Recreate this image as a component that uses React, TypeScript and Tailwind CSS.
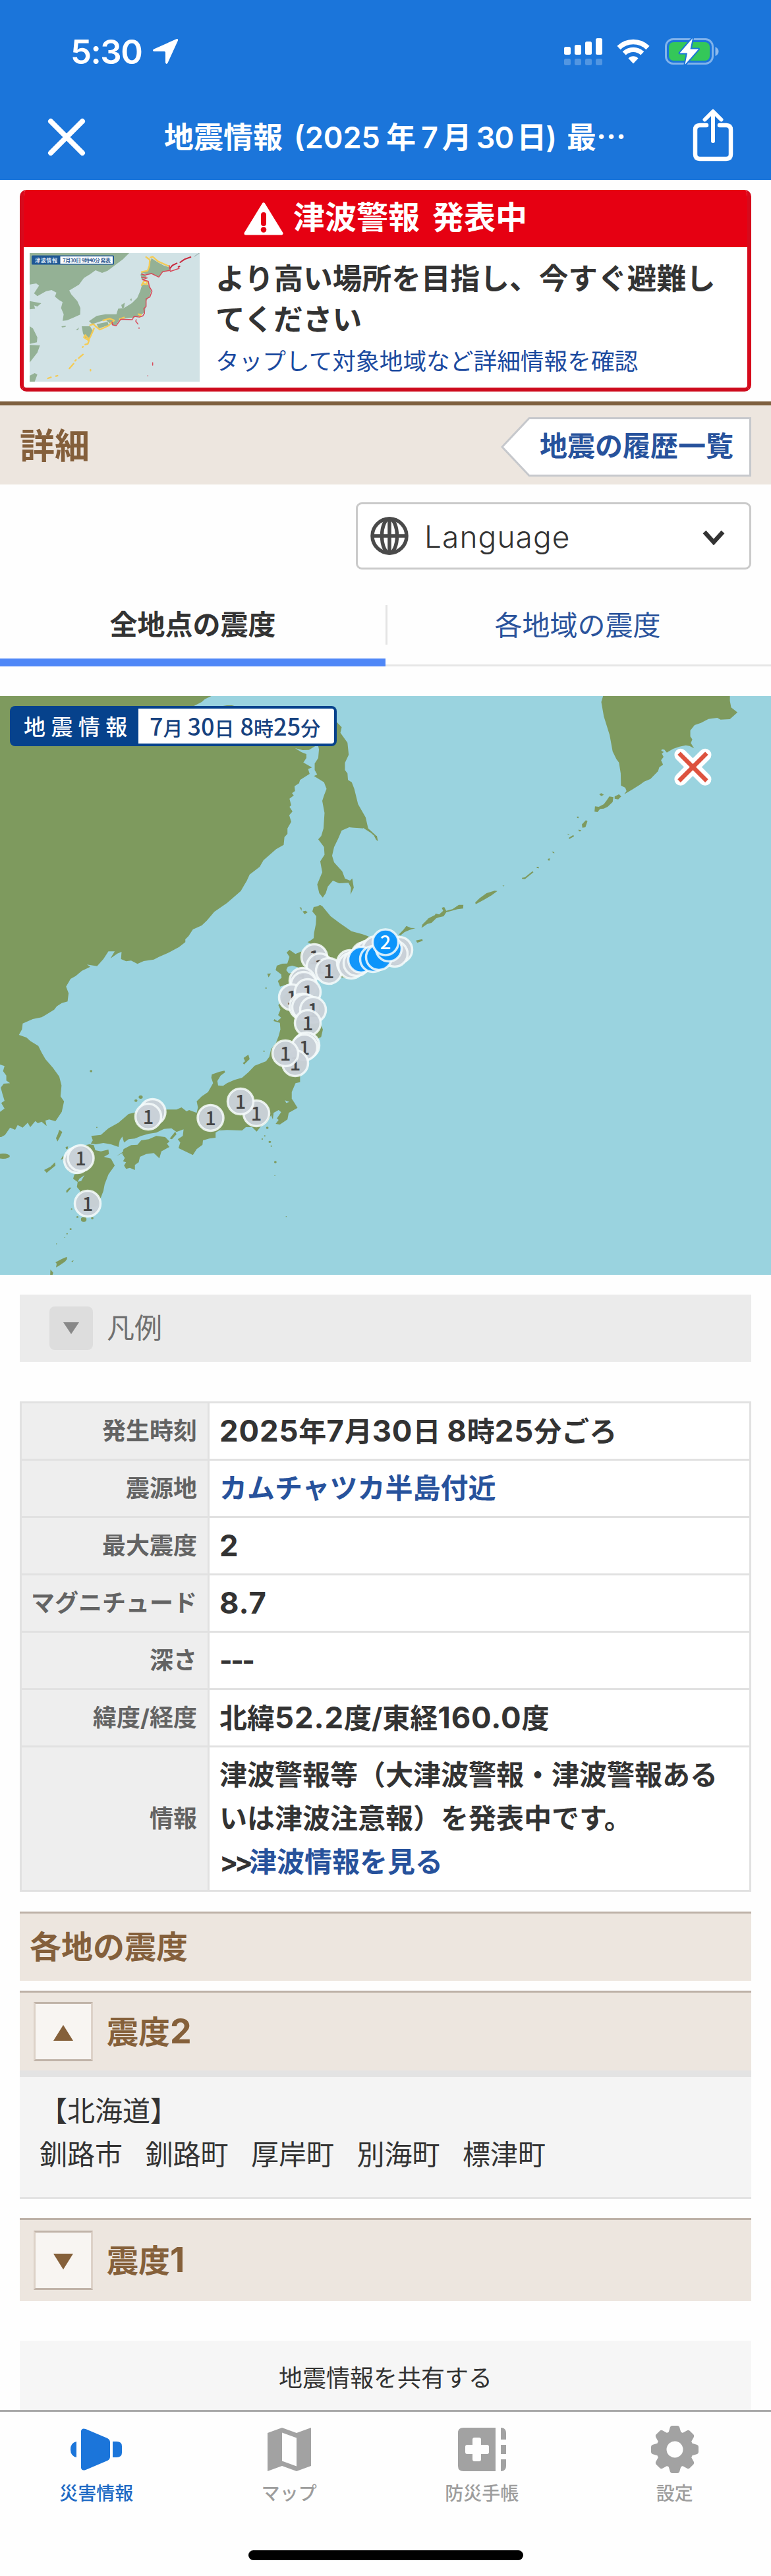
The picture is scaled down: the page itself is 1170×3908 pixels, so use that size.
import type { ReactNode } from 'react';

type Pin = [number, number, string];

const grayPins: Pin[] = [
  [231.5, 631, ''], [225, 638, '1'], [319.5, 640, '1'], [389, 633, '1'], [365, 615, '1'],
  [117, 704, ''], [122.5, 701, '1'], [133, 770, '1'],
  [477, 396, '1'], [485, 410, '1'], [499, 417, '1'],
  [459, 432, '1'], [461, 438, ''], [443, 457, '1'], [467, 449, '1'],
  [459, 471, ''], [463, 472, ''], [475, 476, '1'], [467, 496, '1'],
  [465, 530, ''], [462, 533, '1'], [448, 557, '1'], [433, 542, '1'],
  [553, 393, ''], [560, 390, ''], [570, 384, ''], [531, 405, ''], [533, 409, ''], [541, 405, ''], [606, 385, ''], [599, 391, ''],
];

const bluePins: Pin[] = [
  [548, 400, ''], [566, 399, ''], [575, 396, ''], [590, 383, ''], [585, 373.5, '2'],
];

function MapPin({ pin, fill, color }: { pin: Pin; fill: string; color: string }) {
  const [x, y, label] = pin;
  return (
    <g>
      <circle cx={x} cy={y} r="19.5" fill={fill} fillOpacity="0.97" stroke="#f6fbfb" strokeOpacity="0.85" strokeWidth="3.5" />
      {label && (
        <text x={x} y={y + 10.5} textAnchor="middle" fontSize="29" fontWeight="500" fill={color}>{label}</text>
      )}
    </g>
  );
}

function QuakeMap() {
  return (
    <div className="relative h-[878px] w-full overflow-hidden bg-[#9ad3df]">
      <svg className="block h-full w-full" viewBox="0 0 1170 878" fontFamily="'Noto Sans CJK JP', sans-serif">
        <g transform="translate(0 -16) scale(.38265 .33333)" fill="#7e9a5e">
          <path d="M0 40L838 48L812 62L800 75L765 95L790 110L900 90L920 90L950 100L1100 150L1250 276L1225 293L1200 294L1170 285L1195 303L1215 312L1215 330L1203 350L1237 373L1222 380L1228 402L1190 430L1186 445L1168 458L1170 480L1158 490L1165 500L1148 515L1155 545L1148 552L1160 573L1147 590L1155 620L1140 650L1140 675L1128 690L1125 725L1095 745L1060 780L1045 795L1030 825L990 860L978 890L970 905L955 935L925 965L900 990L850 1030L820 1070L800 1092L765 1110L748 1140L735 1155L735 1168L710 1190L670 1215L630 1235L610 1247L570 1254L545 1267L520 1252L500 1255L480 1245L482 1212L465 1220L438 1242L455 1210L430 1210L410 1245L385 1277L345 1270L358 1280L325 1298L300 1322L280 1335L262 1370L272 1400L268 1438L245 1445L225 1460L215 1475L180 1500L165 1510L130 1518L90 1538L87 1565L75 1590L105 1602L120 1618L152 1640L165 1670L180 1700L210 1740L235 1780L244 1820L240 1870L254 1892L245 1940L220 1983L195 1975L180 1980L185 2005L165 1985L150 1992L140 1982L120 2010L110 1990L90 2012L70 2000L60 2022L40 2012L20 2045L5 2055L0 2055Z" />
          <path d="M0 1725L18 1732L12 1755L25 1775L25 1798L40 1810L15 1812L3 1830L10 1860L18 1890L5 1900L18 1925L0 1940Z" fill="#9ad3df" />
          <ellipse cx="12" cy="2142" rx="27" ry="12" />
          <path d="M1262 276L1265 290L1262 330L1248 355L1248 385L1258 405L1245 412L1285 440L1295 470L1285 500L1278 525L1287 580L1283 650L1274 685L1262 700L1285 735L1287 770L1270 800L1278 850L1258 905L1266 945L1280 965L1292 945L1300 915L1320 888L1345 900L1382 898L1392 920L1390 952L1403 920L1397 878L1388 888L1368 878L1357 845L1325 805L1317 775L1325 735L1340 700L1355 660L1385 645L1440 648L1470 670L1485 685L1497 708L1493 685L1460 650L1450 600L1420 540L1405 470L1395 440L1380 430L1378 400L1368 385L1368 352L1383 315L1378 260L1350 215L1355 190L1330 160L1300 150L1260 200Z" />
          <path d="M1375 636L1400 641L1440 645L1440 650L1385 645Z" />
          <path d="M1188 1008L1196 1012L1196 1025ZM1200 1028L1212 1025L1220 1032L1208 1041ZM1060 1312L1075 1310L1065 1328Z" />
        </g>

        <g transform="translate(400 284) scale(.33333)" fill="#7e9a5e">
          <path d="M257 98L245 105L228 108L222 128L240 150L238 185L230 225L228 250L212 262L200 268L215 275L200 305L168 312L145 322L118 303L105 315L118 335L108 365L85 366L60 375L55 395L80 415L82 430L65 445L75 470L110 460L140 440L165 420L150 405L115 410L103 395L110 380L130 375L155 382L165 395L200 400L295 395L340 425L375 432L430 425L520 370L560 340L600 310L620 262L560 262L530 270L473 240L450 232L400 218L345 180L305 150L268 105Z" />
          <path d="M265 655L270 665L262 700L240 710Z" />
        </g>

        <g transform="translate(570 -16) scale(.38265 .33333)" fill="#7e9a5e">
          <path d="M902 48L895 75L905 140L928 225L940 300L955 335L965 350L972 400L973 455L990 465L995 480L986 495L1020 472L1050 450L1065 437L1090 425L1120 390L1125 372L1140 360L1132 340L1142 325L1135 310L1143 302L1133 297L1135 290L1145 292L1155 305L1180 288L1205 278L1230 272L1245 275L1263 286L1250 262L1256 245L1248 232L1248 205L1265 180L1290 170L1320 152L1355 147L1368 155L1405 153L1435 122L1410 100L1405 70L1405 48Z" />
          <path d="M927 505L943 508L940 530L920 552L905 560L890 562L880 576L868 574L870 550L885 552L905 540L915 525ZM948 505L965 495L974 505L962 518L948 515ZM887 495L895 490L905 497L895 503ZM834 613L840 618L832 645L820 647L818 632ZM799 596L806 597L804 604L799 603ZM803 656L812 657L816 663L808 664ZM759 674L768 677L766 681ZM784 680L787 686L769 698L765 694ZM699 755L706 757L710 763L704 763ZM684 788L692 787L689 797L683 795ZM637 825L646 825L648 832L641 831ZM622 845L626 850L592 881L581 880L580 875L592 873ZM472 934L483 935L460 955L430 975L397 995L395 988L412 968L440 945ZM503 909L511 911L507 914Z" />
          <path d="M182 1103L185 1088L210 1060L200 1065L235 1045L238 1038L252 1042L268 1025L262 1012L272 1008L280 1025L305 1018L330 998L348 998L347 1015L325 1018L280 1032L270 1050L250 1055L240 1060L222 1080L205 1085ZM92 1133L110 1112L122 1094L140 1103L158 1104L135 1112L115 1122L98 1138ZM160 1160L185 1154L187 1162L165 1171ZM-6 684L5 684L9 708L2 702Z" />
        </g>

        <g transform="translate(0 424) scale(.38265 .33333)" fill="#7e9a5e">
          <path d="M1158 60L1120 100L1104 135L1112 155L1103 180L1115 192L1100 208L1088 198L1085 207L1110 215L1112 245L1105 275L1095 305L1075 335L1068 370L1055 390L1010 410L985 440L960 465L930 475L900 490L885 502L865 500L862 480L875 455L893 440L890 433L870 438L840 450L838 465L845 490L825 530L800 550L780 572L785 600L780 625L750 612L740 618L720 600L700 610L660 610L540 622L510 630L470 670L430 695L400 725L362 730L368 750L360 765L380 768L410 762L440 768L470 780L475 750L485 733L492 760L510 745L535 742L560 730L590 720L620 715L650 698L680 695L700 712L728 700L725 730L705 745L715 760L708 785L735 800L765 817L780 790L803 770L805 750L830 742L855 738L855 715L890 690L870 705L900 703L960 705L975 690L1000 690L1018 710L1032 690L1060 665L1075 635L1082 655L1085 625L1105 612L1115 622L1098 650L1105 657L1093 675L1110 678L1140 655L1145 625L1180 602L1168 580L1157 560L1157 530L1172 490L1190 485L1190 460L1210 420L1215 390L1240 345L1250 290L1260 275L1278 240L1265 200L1270 150L1250 100L1240 60L1200 60L1190 30Z" />
          <path d="M485 812L490 790L520 772L545 770L560 750L590 745L620 730L655 735L672 755L662 765L672 780L640 800L632 832L610 808L580 812L555 825L550 850L535 862L535 885L515 875L500 880L492 865L500 850L488 845L495 830ZM510 788L485 808L462 822L490 800Z" />
          <path d="M300 780L355 768L372 772L378 795L400 800L430 792L432 812L412 825L440 833L455 865L430 905L415 950L410 980L400 1010L385 1050L330 1060L310 1010L318 980L305 962L308 940L290 925L295 905L330 895L270 890L280 870L250 840L270 810Z" />
          <path d="M315 925L335 908L322 935L308 938Z" fill="#9ad3df" />
          <path d="M695 710L700 722L682 745L673 742ZM985 360L990 380L968 405L963 398L972 390L966 375ZM235 702L247 712L240 730L228 755L222 740L230 720ZM218 850L220 865L185 898L175 885L200 870ZM260 780L270 778L268 790L262 790ZM250 820L255 830L240 840ZM283 965L265 990L262 980L275 965Z" />
          <circle cx="558" cy="553" r="8" /><circle cx="539" cy="569" r="6" /><circle cx="361" cy="435" r="5" />
          <circle cx="332" cy="1110" r="11" /><circle cx="366" cy="1104" r="5" /><circle cx="307" cy="1099" r="4" /><circle cx="284" cy="1063" r="3" />
          <circle cx="1060" cy="693" r="5" /><circle cx="1050" cy="730" r="3" /><circle cx="1040" cy="744" r="3" /><circle cx="1070" cy="757" r="5" /><circle cx="1076" cy="776" r="3" /><circle cx="1092" cy="849" r="5" /><circle cx="1090" cy="910" r="2" /><circle cx="1135" cy="1097" r="2" />
          <circle cx="280" cy="1154" r="4" /><circle cx="266" cy="1175" r="3" /><circle cx="257" cy="1192" r="2" /><circle cx="224" cy="1221" r="2" /><circle cx="384" cy="691" r="2.5" /><circle cx="1055" cy="57" r="3" /><circle cx="1047" cy="344" r="3" />
          <path d="M265 1280L266 1290L258 1302L232 1322L222 1328L225 1312L220 1305L245 1290ZM200 1338L211 1352L208 1364L199 1364ZM283 1300L292 1296L288 1305Z" />
          <path d="M1130 568L1148 575L1135 580Z" fill="#9ad3df" />
        </g>

        {grayPins.map((p, i) => (
          <MapPin key={i} pin={p} fill="#c9d1d8" color="#444" />
        ))}
        {bluePins.map((p, i) => (
          <MapPin key={i} pin={p} fill="#0a94fb" color="#fff" />
        ))}

        <g strokeLinecap="round">
          <path d="M1032.9 89.2L1070 126.2M1070 89.2L1032.9 126.2" stroke="#fff" strokeWidth="19" />
          <path d="M1030.5 86.8L1072.4 128.600M1072.4 86.8L1030.5 128.600" stroke="#dd523e" strokeWidth="6.500" strokeLinecap="butt" />
        </g>
      </svg>

      <div className="absolute left-[15px] top-[15px] flex h-[61px] w-[496px] items-stretch rounded-[8px] bg-[#06428c] p-[4px] font-['Noto_Sans_CJK_JP',sans-serif]">
        <div className="flex w-[191px] items-center whitespace-nowrap pl-[17px] text-[33px] font-medium leading-none tracking-[8.4px] text-white">地震情報</div>
        <div className="flex flex-1 items-center whitespace-nowrap rounded-r-[4px] bg-white pl-[17px] text-[30px] font-medium leading-none text-[#17427f]">
          <div className="leading-[50px]">
            <span className="text-[36px]">7</span>月<span className="pl-[7px] text-[36px]">30</span>日<span className="pl-[9px] text-[36px]">8</span>時<span className="text-[36px]">25</span>分
          </div>
        </div>
      </div>
    </div>
  );
}

function TsunamiThumb() {
  return (
    <svg className="h-[195px] w-[258px] shrink-0" viewBox="0 0 258 195">
      <rect width="258" height="195" fill="#d1e2e5" />
      <g transform="translate(-5 -4) scale(.33333)">
        <g fill="#94b195">
          <path d="M15 12H468L440 40L410 62L370 92L345 102L315 90L290 108L262 125L240 155L195 182L205 200L232 230L246 262L245 292L215 305L185 318L165 320L170 290L158 262L165 235L148 225L130 210L137 192L115 180L90 185L50 208L35 195L58 160L45 150L15 155Z" />
          <path d="M15 230L68 240L50 255L35 250L40 265L15 268ZM15 345L30 355L50 395L48 418L15 425ZM15 430L62 432L50 465L15 510ZM15 570L38 558L50 565L38 597H15Z" />
          <path d="M570 35L600 55L625 68L655 78L650 90L620 100L605 120L570 105L545 108L525 100L555 90L560 60ZM525 100L548 120L525 132L520 110Z" />
          <path d="M527 155L555 155L568 185L560 210L545 230L540 280L520 295L490 305L455 308L425 315L405 343L385 335L360 315L300 335L285 322L320 298L360 290L410 290L418 265L445 262L480 240L505 215L518 185Z" />
          <path d="M252 345L290 345L302 365L292 395L270 400L258 378ZM320 335L370 325L375 340L330 355ZM432 248L448 238L445 260L436 262ZM160 345L180 343L178 348L162 350ZM225 362L240 350L235 362ZM472 222L480 218L478 232Z" />
        </g>
        <g fill="none" stroke="#f4cb55" strokeWidth="7" strokeLinecap="round" strokeLinejoin="round">
          <path d="M545 30L562 42L560 70L552 92L525 98M565 32L575 28L600 50L650 72M525 158L535 140L550 140L548 154L528 150M510 290L522 292L515 300M425 312L445 305M350 318L380 310L400 318L388 328M290 340L305 335L315 345L335 360L375 342L385 330M308 355L295 385L285 405L268 385L262 395L285 410L280 425L268 428M258 438L256 440M238 490L258 473M222 502L226 498M196 537L215 515M98 582L112 577M135 572L142 570M292 543V547" />
        </g>
        <g fill="none" stroke="#d84a5a" strokeWidth="4.500" strokeLinecap="round" strokeLinejoin="round">
          <path d="M650 68L655 90L620 97L603 121L570 105L540 112L525 108M525 122L550 125L528 133L555 140L560 165L572 185L562 212L545 220L545 255L535 265L538 285L530 298L515 303L490 300L482 315L430 313L408 343L392 338L390 325M655 95L695 82M500 315L498 322L508 335M513 352V355M575 511V522M553 570V571" />
        </g>
        <path d="M655 80L665 68L685 58M692 75L698 72M700 54L720 40L748 30" fill="none" stroke="#c8283c" strokeWidth="6" strokeLinecap="round" />
        <path d="M765 27L788 12" stroke="#94a7a5" strokeWidth="3" />
      </g>
      <rect x="3" y="3.500" width="125" height="14" rx="1.500" fill="#1f5794" />
      <rect x="46.500" y="5" width="79.500" height="11" fill="#fff" />
      <g fontFamily="'Noto Sans CJK JP', sans-serif" fontSize="8" fontWeight="700">
        <text x="8" y="13.500" fill="#dfe9f4" textLength="34">津波情報</text>
        <text x="50" y="13.500" fill="#355f95" textLength="73">7月30日 9時40分 発表</text>
      </g>
    </svg>
  );
}

function Num({ children }: { children: ReactNode }) {
  return <span className="text-[1.08em] tracking-[0.02em]">{children}</span>;
}

function Row({ label, children, last = false }: { label: string; children: ReactNode; last?: boolean }) {
  return (
    <div className={last ? 'flex h-[216px]' : 'flex h-[87px] border-b-3 border-[#e1e1e1]'}>
      <div className="flex w-[285px] shrink-0 items-center justify-end whitespace-nowrap border-r-3 border-[#e1e1e1] bg-[#eeeeee] pr-[16px] text-[36px] font-bold text-[#636363]">{label}</div>
      <div className="flex flex-1 items-center whitespace-nowrap pl-[15px] text-[42px] font-bold leading-[66px] text-[#333]">
        <div>{children}</div>
      </div>
    </div>
  );
}

function IntensityHeader({ up, label, digit, className }: { up: boolean; label: string; digit: string; className: string }) {
  return (
    <div className={className}>
      <div className="ml-[21px] flex h-[90px] w-[90px] items-center justify-center border-3 border-x-[#ddd2c8] border-y-[#c0b3a8] bg-[#f8f5f2]">
        <svg className="mt-[3px] h-[24px] w-[30px]" viewBox="0 0 30 24">
          <path d={up ? 'M15 0L30 24H0Z' : 'M0 0H30L15 24Z'} fill="#85603a" />
        </svg>
      </div>
      <div className="ml-[21px] text-[48px] font-bold leading-none text-[#85603a]">{label}<Num>{digit}</Num></div>
    </div>
  );
}

export default function App() {
  return (
    <div className="flex h-[3908px] w-[1170px] flex-col overflow-hidden bg-[#fefefe] font-['Inter','Noto_Sans_CJK_JP',sans-serif] text-[#333]">
      <header className="h-[273px] shrink-0 bg-[#1b75da] text-white">
        <div className="flex h-[156px] items-center pl-[107px] pr-[79px]">
          <div className="w-[111px] whitespace-nowrap text-[51px] font-semibold leading-none tracking-[-1.500px]">5:30</div>
          <svg className="ml-[13px] h-[40px] w-[40px]" viewBox="0 0 40 40">
            <path d="M36 1.500Q40 0 38.800 4L23.500 37.500Q21.500 40.500 20 37V21.500Q20 20 18.500 20H3Q-1 18.800 2.500 16.500Z" fill="#fff" />
          </svg>
          <div className="flex-1" />
          <svg className="h-[42px] w-[58px]" viewBox="0 0 58 42">
            <g fill="#fff">
              <rect x="0" y="14" width="10" height="12" rx="2.500" />
              <rect x="16" y="11" width="10" height="15" rx="2.500" />
              <rect x="32" y="6" width="10" height="20" rx="2.500" />
              <rect x="48" y="1" width="10" height="25" rx="2.500" />
              <g opacity=".24">
                <rect x="0" y="32" width="10" height="10" rx="2.500" />
                <rect x="16" y="32" width="10" height="10" rx="2.500" />
                <rect x="32" y="32" width="10" height="10" rx="2.500" />
                <rect x="48" y="32" width="10" height="10" rx="2.500" />
              </g>
            </g>
          </svg>
          <svg className="ml-[22px] h-[38px] w-[50px]" viewBox="0 0 50 38">
            <path d="M3 13.500A31.500 31.500 0 0 1 47 13.500" fill="none" stroke="#fff" strokeWidth="7.500" />
            <path d="M11.200 21.800A20 20 0 0 1 38.800 21.800" fill="none" stroke="#fff" strokeWidth="7.200" />
            <path d="M25 37.500L17.500 29.500A10.500 10.500 0 0 1 32.500 29.500Z" fill="#fff" />
          </svg>
          <svg className="ml-[23px] h-[42px] w-[82px]" viewBox="0 0 82 42">
            <rect x="1.500" y="2.500" width="71" height="37" rx="11" fill="none" stroke="#fff" strokeOpacity=".45" strokeWidth="3" />
            <rect x="6" y="7" width="62" height="28" rx="7" fill="#34c759" />
            <path d="M76.500 14V28Q81.500 25.500 81.500 21T76.500 14Z" fill="#fff" fillOpacity=".5" />
            <path d="M42 1L22.500 23.500H34L30.500 41L51 17.500H38.500Z" fill="#fff" stroke="#1b75da" strokeWidth="4" paintOrder="stroke" strokeLinejoin="round" />
          </svg>
        </div>
        <div className="flex h-[108px] items-center pl-[72px] pr-[57px]">
          <svg className="mt-[-6px] h-[58px] w-[58px]" viewBox="0 0 58 58">
            <path d="M5 6L53 54M53 6L5 54" stroke="#fff" strokeWidth="8" strokeLinecap="round" />
          </svg>
          <div className="mt-[-4px] flex-1 whitespace-nowrap pl-[119px] text-[45px] font-semibold leading-none">
            地震情報<span className="pl-[17px]">(2025</span><span className="pl-[9px]">年</span><span className="pl-[8px]">7</span><span className="pl-[6px]">月</span><span className="pl-[7px] tracking-[-1px]">30</span><span className="pl-[5px]">日</span><span className="ml-[-1px]">)</span><span className="pl-[15px]">最⋯</span>
          </div>
          <svg className="mt-[-11px] h-[80px] w-[62px]" viewBox="0 0 62 80">
            <path d="M21 25H11Q4 25 4 32V69Q4 76 11 76H51Q58 76 58 69V32Q58 25 51 25H41" fill="none" stroke="#fff" strokeWidth="6.500" strokeLinecap="round" />
            <path d="M31 49V5M18.500 16.500L31 4L43.500 16.500" fill="none" stroke="#fff" strokeWidth="6" strokeLinecap="round" strokeLinejoin="round" />
          </svg>
        </div>
      </header>

      <section className="mx-[30px] mt-[15px] h-[306px] shrink-0 overflow-hidden rounded-[10px] border-6 border-t-0 border-[#d60a1c] border-b-[#cd0a1c] bg-white">
        <div className="mx-[-6px] flex h-[87px] items-center justify-center bg-[#e60012] text-[48px] font-bold leading-none text-white">
          <svg className="h-[50px] w-[60px]" viewBox="0 0 60 50">
            <path d="M30 3L57 47H3Z" fill="#fff" stroke="#fff" strokeWidth="5" strokeLinejoin="round" />
            <path d="M30 19V32" stroke="#e60012" strokeWidth="8" strokeLinecap="round" />
            <circle cx="30" cy="41.500" r="4.300" fill="#e60012" />
          </svg>
          <span className="-mt-[3px] ml-[15px]">津波警報</span>
          <span className="-mt-[3px] ml-[19px]">発表中</span>
        </div>
        <div className="flex pl-[9px] pt-[9px]">
          <TsunamiThumb />
          <div className="ml-[24px] mt-[8px] whitespace-nowrap text-[44.700px] font-bold leading-[62px]">
            <div>より高い場所を目指し、今すぐ避難し</div>
            <div>てください</div>
            <div className="text-[35.700px] font-normal leading-[65px] text-[#1b4a9f]">タップして対象地域など詳細情報を確認</div>
          </div>
        </div>
      </section>

      <section className="mt-[15px] flex h-[126px] shrink-0 items-center justify-between border-t-6 border-[#7e603f] bg-[#ede6df] pl-[30px] pr-[30px]">
        <h1 className="mt-[4px] text-[53px] font-bold leading-none text-[#845f3b]">詳細</h1>
        <div className="relative mt-[6px] h-[90px] w-[380px] pl-[59px] text-[42px] font-bold leading-[88px] text-[#27529c]">
          <svg className="absolute inset-0" width="380" height="90" viewBox="0 0 380 90">
            <path d="M43 1.500H378.500V88.500H43L2 45Z" fill="#fff" stroke="#c6c8cc" strokeWidth="3" />
          </svg>
          <span className="relative">地震の履歴一覧</span>
        </div>
      </section>

      <div className="ml-[540px] mt-[27px] flex h-[102px] w-[600px] shrink-0 items-center rounded-[9px] border-3 border-[#cacaca] bg-white pl-[19px] pr-[37px]">
        <svg className="h-[58px] w-[58px]" viewBox="0 0 58 58" fill="none" stroke="#4a4a4a" strokeWidth="5.500">
          <circle cx="29" cy="29" r="26" />
          <ellipse cx="29" cy="29" rx="11.500" ry="26" />
          <path d="M29 3V55M3 29H55" />
        </svg>
        <div className="ml-[24px] mt-[2px] flex-1 text-[46px] font-light leading-none tracking-[1.100px]">Language</div>
        <svg className="mt-[4px] h-[23px] w-[34px]" viewBox="0 0 34 23">
          <path d="M3 3L17 18.500L31 3" fill="none" stroke="#333" strokeWidth="6.500" />
        </svg>
      </div>

      <nav className="mt-[24px] flex h-[123px] shrink-0 text-center text-[42px] leading-[119px]">
        <div className="h-[123px] w-[585px] border-b-12 border-[#4f87f7] font-bold">全地点の震度</div>
        <div className="flex h-[123px] w-[585px] items-center border-b-3 border-[#e6e6e6] text-[#2a539c]">
          <div className="h-[60px] w-[3px] bg-[#e4e4e4]" />
          <div className="flex-1 pr-[5px]">各地域の震度</div>
        </div>
      </nav>

      <div className="mt-[45px] shrink-0">
        <QuakeMap />
      </div>

      <div className="mx-[30px] mt-[30px] flex h-[102px] shrink-0 items-center bg-[#ebebeb] pl-[45px]">
        <div className="flex h-[66px] w-[66px] items-center justify-center rounded-[8px] bg-[#dddddd]">
          <svg className="h-[18px] w-[24px]" viewBox="0 0 24 18"><path d="M0 0H24L12 18Z" fill="#888" /></svg>
        </div>
        <div className="ml-[21px] text-[42px] leading-none text-[#707070]">凡例</div>
      </div>

      <section className="mx-[30px] mt-[60px] shrink-0 border-3 border-[#e1e1e1] bg-white">
        <Row label="発生時刻"><Num>2025</Num>年<Num>7</Num>月<Num>30</Num>日 <Num>8</Num>時<Num>25</Num>分ごろ</Row>
        <Row label="震源地"><span className="text-[#27529c]">カムチャツカ半島付近</span></Row>
        <Row label="最大震度"><Num>2</Num></Row>
        <Row label="マグニチュード"><Num>8.7</Num></Row>
        <Row label="深さ"><span className="tracking-[-2.500px]">---</span></Row>
        <Row label="緯度/経度">北緯<Num>52.2</Num>度/東経<Num>160.0</Num>度</Row>
        <Row label="情報" last>
          津波警報等（大津波警報・津波警報ある<br />
          いは津波注意報）を発表中です。<br />
          <span className="tracking-[-6px]">&gt;&gt;</span><span className="text-[#27529c]">津波情報を見る</span>
        </Row>
      </section>

      <h2 className="mx-[30px] mt-[30px] flex h-[105px] shrink-0 items-center border-t-3 border-[#bdb1a7] bg-[#ede6df] pl-[15px] text-[48px] font-bold leading-none text-[#845f3b]">各地の震度</h2>
      <IntensityHeader up label="震度" digit="2" className="mx-[30px] mt-[15px] flex h-[121px] shrink-0 items-center border-t-3 border-[#bdb1a7] bg-[#ede6df]" />
      <div className="mx-[30px] h-[195px] shrink-0 whitespace-pre border-b-3 border-t-10 border-[#e3e3e3] bg-[#f4f4f4] pl-[30px] pt-[19px] text-[42px] leading-[66px]">
        <div>【北海道】</div>
        <div className="flex gap-[34.500px]">
          <span>釧路市</span><span>釧路町</span><span>厚岸町</span><span>別海町</span><span>標津町</span>
        </div>
      </div>
      <IntensityHeader up={false} label="震度" digit="1" className="mx-[30px] mt-[29px] flex h-[126px] shrink-0 items-center border-t-3 border-[#bdb1a7] bg-[#ede6df] pb-[1px]" />

      <div className="mx-[30px] mt-[60px] h-[105px] shrink-0 bg-[#f6f6f6] text-center text-[36px] leading-[115px]">地震情報を共有する</div>

      <footer className="flex flex-1 flex-col border-t-3 border-[#a9a9a9] bg-[#fefefe] text-[28px] font-medium leading-none text-[#9d9d9d]">
        <div className="grid grid-cols-4 justify-items-center pt-[21px]">
          <div className="flex flex-col items-center text-[#1d69c4]">
            <svg className="h-[72px] w-[78px]" viewBox="0 0 78 72" fill="#1b75da">
              <path d="M9 24V48Q0 46 0 36T9 24ZM16 8Q17 3 23 5L56 19Q60 21 60 25V47Q60 51 56 53L23 67Q17 69 16 64ZM64 24H70Q78 24 78 31V41Q78 48 70 48H64Z" />
            </svg>
            <span className="mt-[17px]">災害情報</span>
          </div>
          <div className="flex flex-col items-center">
            <svg className="h-[72px] w-[66px]" viewBox="0 0 66 72">
              <path d="M0 11L22 3L44 11L66 3V61L44 69L22 61L0 69Z" fill="#a2a2a2" />
              <path d="M22 10.500L44 18.500V61.500L22 53.500Z" fill="#fefefe" />
            </svg>
            <span className="mt-[17px]">マップ</span>
          </div>
          <div className="flex flex-col items-center">
            <svg className="h-[72px] w-[73px]" viewBox="0 0 73 72" fill="#a2a2a2">
              <path d="M8 3H57V69H8Q0 69 0 61V11Q0 3 8 3ZM65 3Q73 3 73 11V21H65ZM65 29H73V43H65ZM65 51H73V61Q73 69 65 69Z" />
              <path d="M22 21Q22 18 25 18H32Q35 18 35 21V29H44Q47 29 47 32V40Q47 43 44 43H35V51Q35 54 32 54H25Q22 54 22 51V43H14Q11 43 11 40V32Q11 29 14 29H22Z" fill="#fefefe" />
            </svg>
            <span className="mt-[17px]">防災手帳</span>
          </div>
          <div className="flex flex-col items-center">
            <svg className="h-[72px] w-[74px]" viewBox="-37 -36 74 72" fill="#a2a2a2">
              <circle r="28" />
              <g>
                <path id="tooth" d="M-10 -24L-7 -34Q-6 -36 -4 -36H4Q6 -36 7 -34L10 -24Z" />
                <use href="#tooth" transform="rotate(45)" />
                <use href="#tooth" transform="rotate(90)" />
                <use href="#tooth" transform="rotate(135)" />
                <use href="#tooth" transform="rotate(180)" />
                <use href="#tooth" transform="rotate(225)" />
                <use href="#tooth" transform="rotate(270)" />
                <use href="#tooth" transform="rotate(315)" />
              </g>
              <circle r="12.500" fill="#fefefe" />
            </svg>
            <span className="mt-[17px]">設定</span>
          </div>
        </div>
        <div className="mx-auto mb-[24px] mt-auto h-[15px] w-[417px] rounded-full bg-black" />
      </footer>
    </div>
  );
}
